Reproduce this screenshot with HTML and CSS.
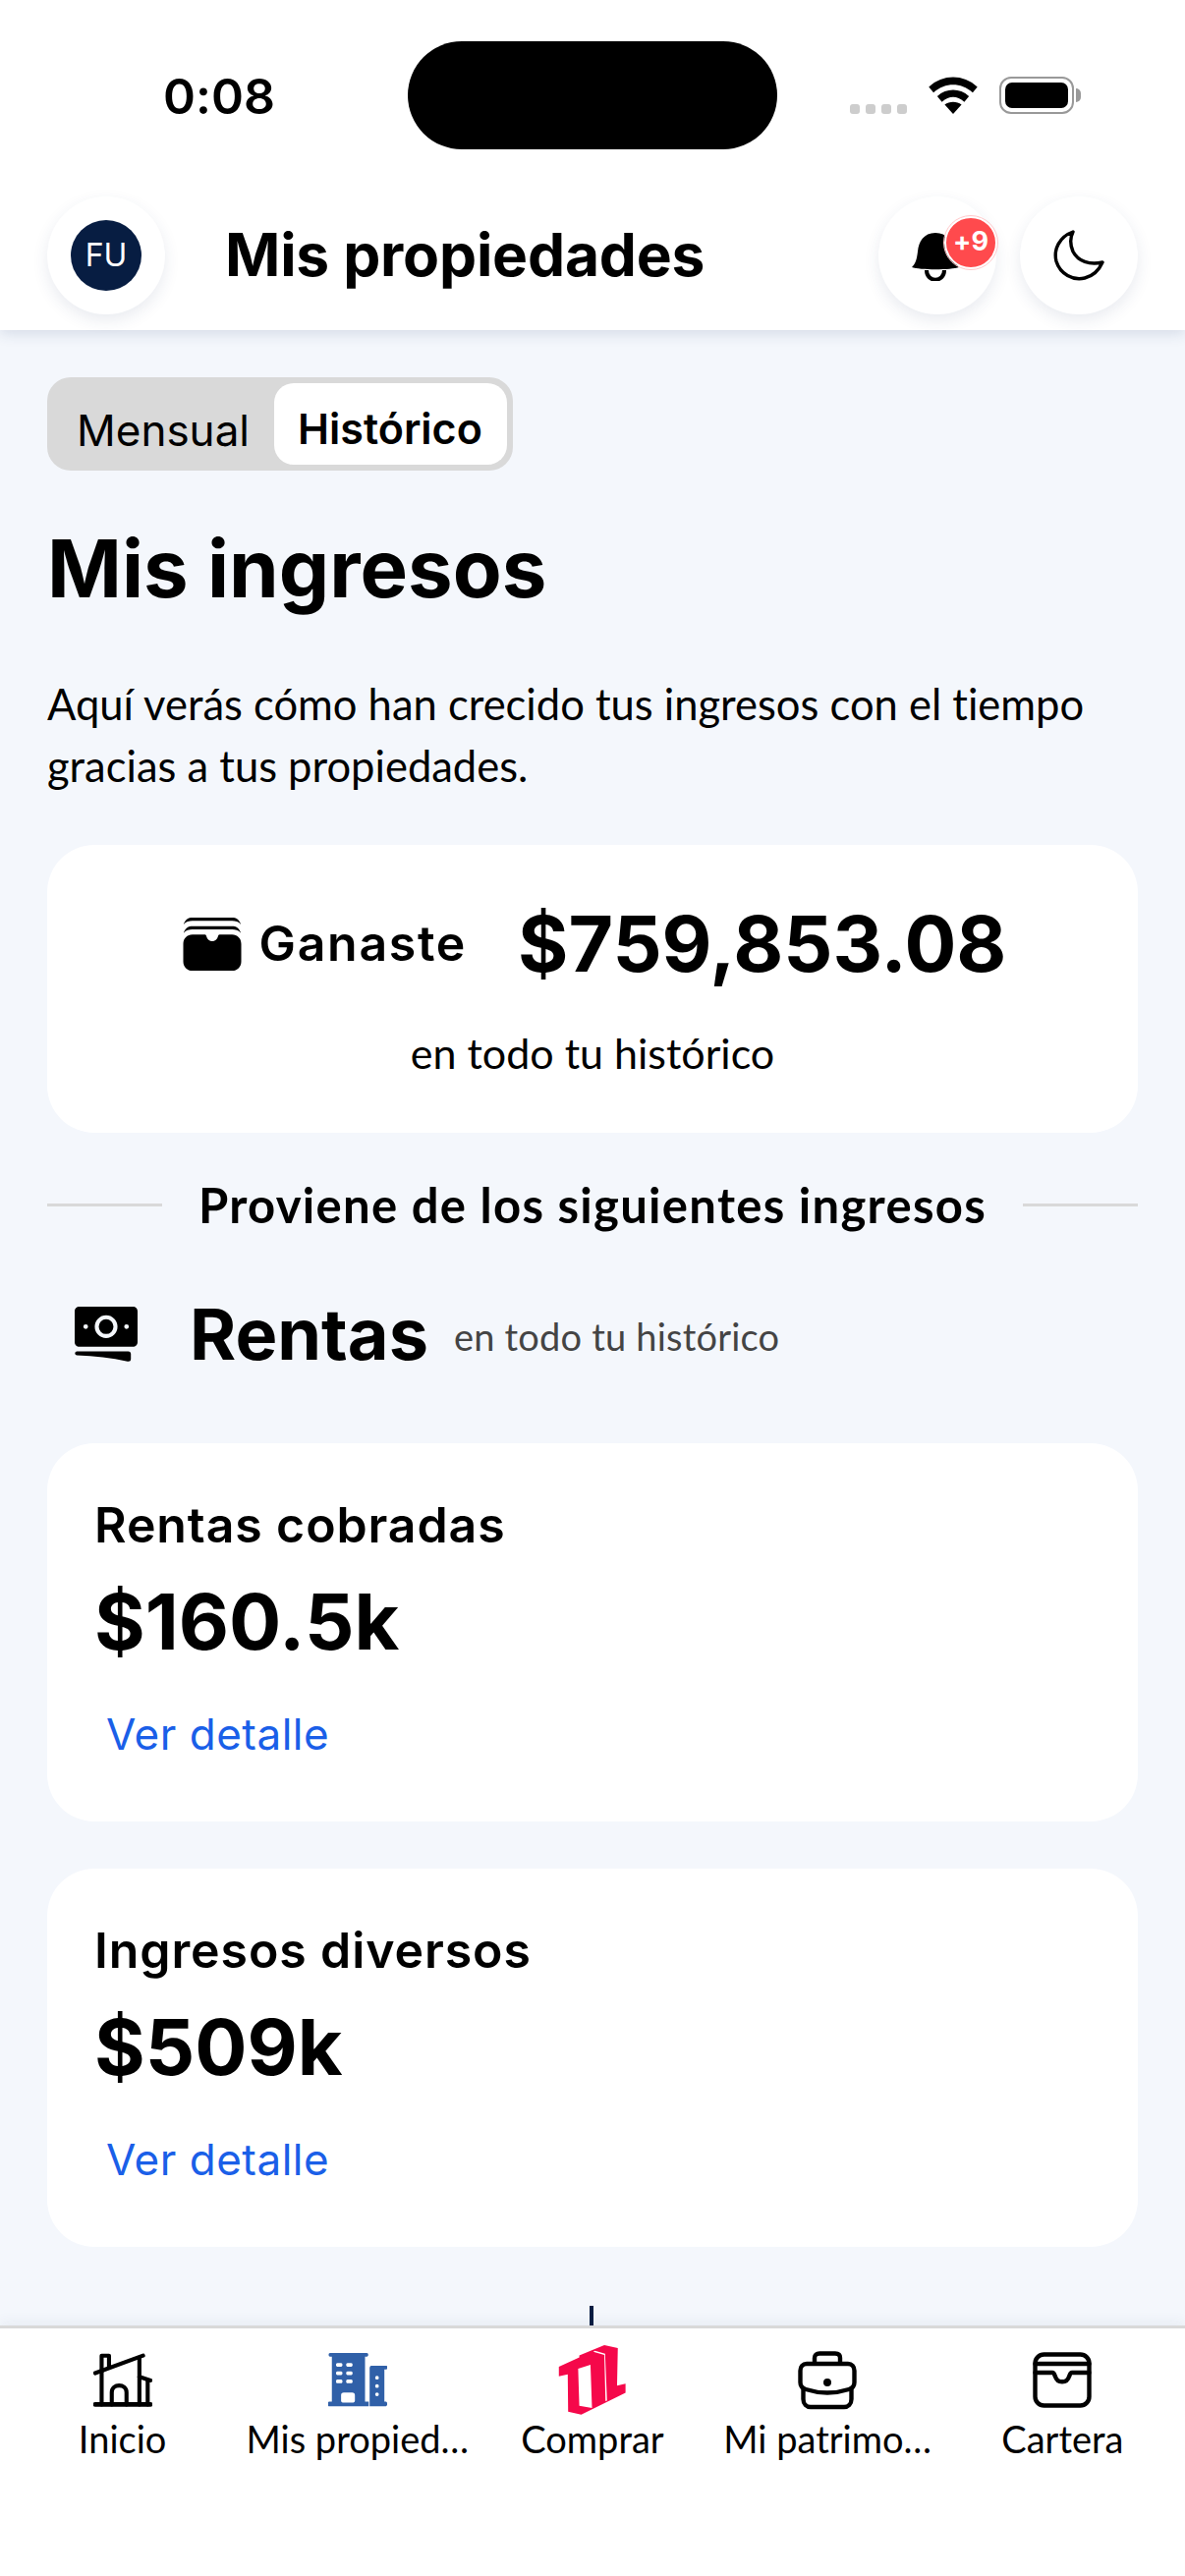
FILE: index.html
```html
<!DOCTYPE html>
<html lang="es">

<head>
    <meta charset="UTF-8">
    <meta name="viewport" content="width=device-width, initial-scale=1.0">
    <title>Mis propiedades</title>
    <link rel="stylesheet" href="styles.css">
</head>

<body>
    <header class="top">
        <div class="status">
            <span class="time">0:08</span>
            <div class="island"></div>
            <div class="status-icons">
                <div class="dots"><i></i><i></i><i></i><i></i></div>
                <svg class="wifi" viewBox="0 0 52 40">
                    <path d="M0 11 C15 -3 37 -3 52 11 L47 17 C34 6 18 6 5 17Z" />
                    <path d="M9 21 C19 12 33 12 43 21 L38 27 C30 20 22 20 14 27Z" />
                    <path d="M17 30 C22 26 30 26 35 30 L26 40Z" />
                </svg>
                <div class="battery"><div class="battery-fill"></div></div>
            </div>
        </div>
        <div class="appbar">
            <div class="round-btn"><div class="avatar">FU</div></div>
            <h1 class="title">Mis propiedades</h1>
            <div class="round-btn bell-btn">
                <svg class="bell" viewBox="0 0 50 50">
                    <path d="M24 1 C12 1 7 10 6 20 C5 28 4 32 0 36 C8 39 40 39 48 36 C44 32 43 28 42 20 C41 10 36 1 24 1Z" />
                    <path d="M15 39 C15 52 33 52 33 39" fill="#fff" stroke="#000" stroke-width="4" />
                </svg>
                <span class="badge">+9</span>
            </div>
            <div class="round-btn">
                <svg class="moon" viewBox="0 0 52 52">
                    <path d="M20 2 C6 7 0 20 3 32 C7 45 20 52 32 49 C40 47 46 42 50 33 C37 36 25 32 20 22 C17 15 17 8 20 2Z" fill="none" stroke="#000" stroke-width="3.4" stroke-linejoin="round" />
                </svg>
            </div>
        </div>
    </header>

    <main class="content">
        <div class="segment">
            <span class="seg-item">Mensual</span>
            <span class="seg-item active">Histórico</span>
        </div>

        <h2 class="page-title">Mis ingresos</h2>
        <p class="intro">Aquí verás cómo han crecido tus ingresos con el tiempo gracias a tus propiedades.</p>

        <section class="card total">
            <div class="total-row">
                <svg class="wallet-solid" viewBox="0 0 177 165">
                    <path d="M1 24 C6 8 16 3 28 3 H149 C161 3 171 8 176 24 C168 15 160 13 149 13 H28 C17 13 9 15 1 24Z" />
                    <path d="M1 50 C6 34 16 29 28 29 H149 C161 29 171 34 176 50 C168 41 160 39 149 39 H28 C17 39 9 41 1 50Z" />
                    <path d="M28 55 H66 C70 55 70 58 71 61 C75 80 102 80 106 61 C107 58 107 55 111 55 H149 C165 55 177 67 177 83 V137 C177 153 165 165 149 165 H28 C12 165 0 153 0 137 V83 C0 67 12 55 28 55Z" />
                </svg>
                <span class="total-label">Ganaste</span>
                <span class="total-amount">$759,853.08</span>
            </div>
            <p class="total-sub">en todo tu histórico</p>
        </section>

        <div class="divider">
            <span class="divider-line"></span>
            <span class="divider-text">Proviene de los siguientes ingresos</span>
            <span class="divider-line"></span>
        </div>

        <div class="section-head">
            <svg class="money" viewBox="0 0 188 165">
                <path fill-rule="evenodd" d="M14 0 H174 C182 0 188 6 188 14 V106 C188 114 182 120 174 120 H14 C6 120 0 114 0 106 V14 C0 6 6 0 14 0Z M94 26 A34 34 0 1 0 94 94 A34 34 0 1 0 94 26Z M94 38 A22 22 0 1 1 94 82 A22 22 0 1 1 94 38Z M33 53 A7 7 0 1 0 33 67 A7 7 0 1 0 33 53Z M155 53 A7 7 0 1 0 155 67 A7 7 0 1 0 155 53Z" />
                <path d="M7 134 H160 C165 134 168 137 168 141 V157 C168 163 164 165 158 164 C110 153 60 148 7 146 C-1 145 -1 135 7 134Z" />
            </svg>
            <span class="section-title">Rentas</span>
            <span class="section-sub">en todo tu histórico</span>
        </div>

        <section class="card income">
            <h3 class="income-name">Rentas cobradas</h3>
            <div class="income-value">$160.5k</div>
            <a class="income-link">Ver detalle</a>
        </section>

        <section class="card income">
            <h3 class="income-name">Ingresos diversos</h3>
            <div class="income-value">$509k</div>
            <a class="income-link">Ver detalle</a>
        </section>

        <div class="tick"></div>
    </main>

    <nav class="tabbar">
        <div class="tab">
            <svg class="tab-icon" viewBox="0 0 64 60" fill="none" stroke="#000" stroke-width="4.4" stroke-linecap="round" stroke-linejoin="round">
                <path d="M2 56 H62" stroke-width="5" />
                <path d="M2 22 L54 3" />
                <path d="M9 20 V3 H17 V16" />
                <path d="M9 20 V56" />
                <path d="M50 5 V56" />
                <path d="M50 26 L62 30" />
                <path d="M59 30 V56" />
                <path d="M20 56 V43 C20 33 36 33 36 43 V56" />
            </svg>
            <span class="tab-label">Inicio</span>
        </div>
        <div class="tab">
            <svg class="tab-icon" viewBox="0 0 64 60">
                <path fill="#3060a8" fill-rule="evenodd" d="M4 0 H42 C44 0 44 4 42 4 H40 V53 H44 V58 H1 C-1 58 -1 53 1 53 H4 V4 H2 C0 4 0 0 2 0Z M10 11 H14 C16 11 16 15 14 15 H10 C8 15 8 11 10 11Z M21 11 H25 C27 11 27 15 25 15 H21 C19 15 19 11 21 11Z M10 20 H14 C16 20 16 24 14 24 H10 C8 24 8 20 10 20Z M21 20 H25 C27 20 27 24 25 24 H21 C19 24 19 20 21 20Z M10 29 H14 C16 29 16 33 14 33 H10 C8 33 8 29 10 29Z M21 29 H25 C27 29 27 33 25 33 H21 C19 33 19 29 21 29Z M17 43 H26 C28 43 29 44 29 46 V52 C29 53 28 54 26 54 H17 C15 54 14 53 14 52 V46 C14 44 15 43 17 43Z" />
                <path fill="#3060a8" fill-rule="evenodd" d="M47 14 H63 C65 14 65 18 63 18 H61 V53 H62 C65 53 65 58 62 58 H45 V18 C45 16 45 14 47 14Z M53 25 A2 2 0 1 0 53 29 A2 2 0 1 0 53 25Z M53 34 A2 2 0 1 0 53 38 A2 2 0 1 0 53 34Z M53 43 A2 2 0 1 0 53 47 A2 2 0 1 0 53 43Z" />
            </svg>
            <span class="tab-label">Mis propied…</span>
        </div>
        <div class="tab">
            <svg class="tab-icon logo" viewBox="0 0 176 214" preserveAspectRatio="none">
                <path fill="#f5084a" fill-rule="evenodd" d="M2 66 L55 38 L55 32 L120 0 L155 9 L153 124 L175 118 L175 146 L60 213 L26 204 L25 90 L2 96Z M52 72 L55 186 L88 193 L84 60Z M91 20 L120 30 L123 172 L127 170 L122 26 L96 17Z" />
            </svg>
            <span class="tab-label">Comprar</span>
        </div>
        <div class="tab">
            <svg class="tab-icon" viewBox="0 0 60 60" fill="none" stroke="#000" stroke-width="4.4" stroke-linecap="round" stroke-linejoin="round">
                <path d="M17 12 V7 C17 4 19 2.5 22 2.5 H38 C41 2.5 43 4 43 7 V12" />
                <path d="M9 13 H51 C55 13 57.5 16 57.5 20 V32 C57.5 36 55 38 52 39 C38 43.5 22 43.5 8 39 C5 38 2.5 36 2.5 32 V20 C2.5 16 5 13 9 13Z" />
                <path d="M5.5 39 V49 C5.5 54 9 57 13 57 H47 C51 57 54.5 54 54.5 49 V39" />
                <circle cx="30" cy="32" r="1.8" fill="#000" />
            </svg>
            <span class="tab-label">Mi patrimo…</span>
        </div>
        <div class="tab">
            <svg class="tab-icon" viewBox="0 0 60 58" fill="none" stroke="#000" stroke-width="4.4" stroke-linecap="round" stroke-linejoin="round">
                <rect x="2.5" y="2.5" width="55" height="52" rx="9" />
                <path d="M2.5 12 H57.5" />
                <path d="M2.5 21 H20 C22 21 22 23 23 25 C25 32 35 32 37 25 C38 23 38 21 40 21 H57.5" />
            </svg>
            <span class="tab-label">Cartera</span>
        </div>
    </nav>
</body>

</html>
```

FILE: styles.css
```css
:root {
    --bg: #f4f7fc;
    --line: #d9d9d9;
    --navy: #071d42;
    --link: #1a5fe8;
    --red: #ff4a4d;
    --heading: 'Inter', sans-serif;
    --body: 'Lato', sans-serif;
}

* {
    margin: 0;
    padding: 0;
    box-sizing: border-box;
}

body {
    width: 1206px;
    height: 2622px;
    display: flex;
    flex-direction: column;
    overflow: hidden;
    background: var(--bg);
    color: #000;
    font-family: var(--body);
    font-variant-ligatures: none;
}

/* barra superior */
.top {
    height: 336px;
    background: #fff;
    box-shadow: 0 3px 14px rgba(40, 60, 110, 0.16);
    position: relative;
    z-index: 2;
}

.status {
    height: 200px;
    padding: 42px 0 0 166px;
    display: flex;
    align-items: flex-start;
}

.time {
    width: 249px;
    padding-top: 28px;
    font-family: var(--heading);
    font-size: 50px;
    line-height: 56px;
    font-weight: 600;
}

.island {
    width: 376px;
    height: 110px;
    border-radius: 55px;
    background: #000;
}

.status-icons {
    margin: 36px 0 0 74px;
    display: flex;
    align-items: flex-start;
}

.dots {
    display: flex;
    gap: 6px;
    margin-top: 28px;
}

.dots i {
    width: 10px;
    height: 10px;
    border-radius: 3px;
    background: #cdcdcd;
}

.wifi {
    width: 52px;
    height: 38px;
    margin-left: 21px;
}

.battery {
    width: 76px;
    height: 38px;
    margin-left: 21px;
    padding: 4px;
    border: 2px solid #999;
    border-radius: 12px;
    position: relative;
}

.battery::after {
    content: '';
    position: absolute;
    right: -9px;
    top: 10px;
    width: 5px;
    height: 14px;
    border-radius: 0 6px 6px 0;
    background: #999;
}

.battery-fill {
    height: 100%;
    border-radius: 7px;
    background: #000;
}

.appbar {
    padding: 0 48px;
    display: flex;
    align-items: center;
    gap: 24px;
}

.round-btn {
    width: 120px;
    height: 120px;
    flex: none;
    border-radius: 50%;
    background: #fff;
    box-shadow: 0 6px 16px rgba(40, 60, 110, 0.1);
    display: flex;
    align-items: center;
    justify-content: center;
    position: relative;
}

.avatar {
    width: 72px;
    height: 72px;
    border-radius: 50%;
    background: var(--navy);
    color: #fff;
    font-family: var(--heading);
    font-size: 32px;
    line-height: 72px;
    text-align: center;
}

.title {
    flex: 1;
    padding: 0 0 3px 37px;
    font-family: var(--heading);
    font-size: 60.5px;
    font-weight: 700;
    letter-spacing: -0.2px;
}

.bell {
    width: 50px;
    height: 50px;
    margin-right: 2px;
    margin-top: 2px;
}

.badge {
    position: absolute;
    top: 20px;
    right: -1px;
    width: 54px;
    height: 54px;
    border-radius: 50%;
    background: var(--red);
    border: 2px solid #fff;
    outline: 1px solid #ffc9cb;
    color: #fff;
    font-family: var(--heading);
    font-size: 27px;
    font-weight: 700;
    line-height: 48px;
    text-align: center;
}

.moon {
    width: 52px;
    height: 52px;
}

/* contenido */
.content {
    flex: 1;
    padding: 48px 48px 0;
    position: relative;
    overflow: hidden;
}

.segment {
    width: 474px;
    height: 95px;
    padding: 6px;
    border-radius: 24px;
    background: var(--line);
    display: flex;
    align-items: center;
    justify-content: space-between;
    font-family: var(--heading);
    font-size: 44px;
}

.seg-item {
    padding: 12px 0 0 24px;
}

.seg-item.active {
    width: 237px;
    height: 83px;
    padding: 2px 0 0 24px;
    border-radius: 20px;
    background: #fff;
    font-size: 43px;
    font-weight: 600;
    line-height: 88px;
}

.page-title {
    margin-top: 46px;
    font-family: var(--heading);
    font-size: 81.5px;
    line-height: 108px;
    font-weight: 700;
}

.intro {
    margin-top: 52px;
    font-size: 43.5px;
    line-height: 63px;
}

.card {
    background: #fff;
    border-radius: 48px;
}

.total {
    height: 293px;
    margin-top: 49px;
    padding-top: 50px;
    text-align: center;
}

.total-row {
    display: flex;
    align-items: center;
    justify-content: center;
    height: 100px;
    padding-left: 4px;
}

.wallet-solid {
    width: 60px;
    height: 55px;
    margin-right: 18px;
}

.total-label {
    font-family: var(--heading);
    font-size: 50px;
    font-weight: 600;
    letter-spacing: 1.7px;
    margin-right: 52px;
}

.total-amount {
    font-family: var(--heading);
    font-size: 78.5px;
    font-weight: 700;
}

.total-sub {
    margin-top: 35px;
    font-size: 43px;
    line-height: 54px;
}

.divider {
    margin-top: 40px;
    display: flex;
    align-items: center;
    justify-content: space-between;
}

.divider-line {
    width: 117px;
    height: 3px;
    background: var(--line);
}

.divider-text {
    font-size: 49px;
    line-height: 66px;
    font-weight: 700;
    letter-spacing: 1.3px;
}

.section-head {
    margin-top: 54px;
    padding-left: 28px;
    display: flex;
    align-items: center;
}

.money {
    width: 64px;
    height: 58px;
    margin-right: 53px;
}

.section-title {
    font-family: var(--heading);
    font-size: 72px;
    line-height: 90px;
    font-weight: 700;
    margin-right: 26px;
}

.section-sub {
    font-size: 38px;
    color: #444;
    letter-spacing: 0.2px;
    padding-top: 4px;
}

.income {
    height: 385px;
    margin-top: 48px;
    padding: 53px 48px 0;
}

.section-head + .income {
    margin-top: 66px;
}

.income-name {
    font-family: var(--heading);
    font-size: 50px;
    line-height: 60px;
    font-weight: 600;
    letter-spacing: 0.9px;
}

.income-value {
    margin-top: 14px;
    font-family: var(--heading);
    font-size: 79px;
    line-height: 108px;
    font-weight: 700;
}

.income-link {
    display: block;
    margin: 31px 0 0 12px;
    font-family: var(--heading);
    font-size: 44px;
    line-height: 60px;
    letter-spacing: 0.5px;
    color: var(--link);
}

.tick {
    position: absolute;
    left: 600px;
    bottom: 0;
    width: 4px;
    height: 20px;
    background: var(--navy);
}

/* navegacion inferior */
.tabbar {
    height: 255px;
    flex: none;
    padding: 23px 5px 0;
    background: #fff;
    border-top: 3px solid var(--line);
    box-shadow: 0 -4px 12px rgba(40, 60, 110, 0.06);
    display: grid;
    grid-template-columns: repeat(5, 1fr);
    position: relative;
    z-index: 1;
}

.tab {
    min-width: 0;
    padding: 0 4px;
    display: flex;
    flex-direction: column;
    align-items: center;
}

.tab-icon {
    width: 60px;
    height: 60px;
    flex: none;
}

.tab-icon.logo {
    width: 69px;
    height: 71px;
    margin-top: -6px;
    margin-bottom: -5px;
}

.tab-label {
    margin-top: 4px;
    font-size: 38px;
    line-height: 50px;
    text-align: center;
    white-space: nowrap;
}
```
